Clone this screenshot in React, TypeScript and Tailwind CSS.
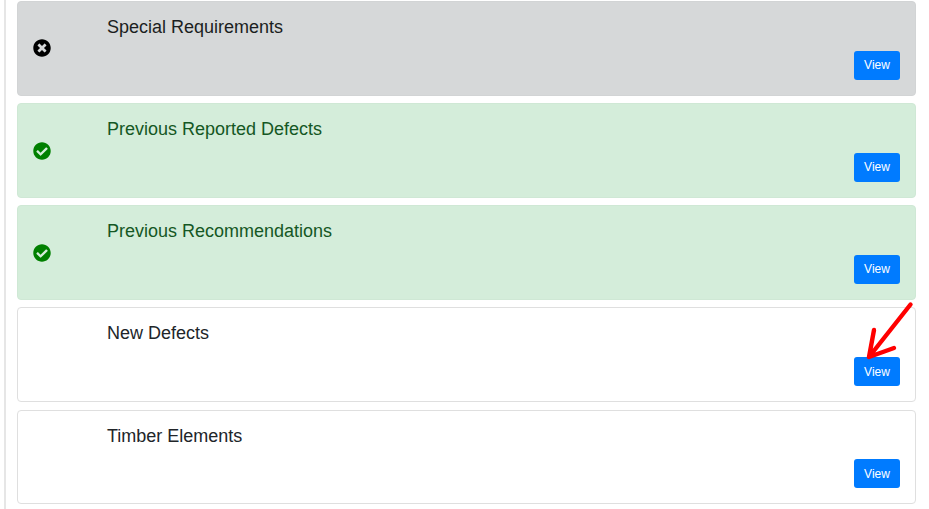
import { FaCheckCircle, FaTimesCircle } from "react-icons/fa";

type Item = { title: string; tone: "grey" | "green" | "white" };

const items: Item[] = [
  { title: "Special Requirements", tone: "grey" },
  { title: "Previous Reported Defects", tone: "green" },
  { title: "Previous Recommendations", tone: "green" },
  { title: "New Defects", tone: "white" },
  { title: "Timber Elements", tone: "white" },
];

const toneClass = {
  grey: "bg-[#d6d8d9] border-[#d2d4d5] text-[#1b1e21]",
  green: "bg-[#d4edda] border-[#cfe8d5] text-[#155724]",
  white: "bg-white border-[#dfdfdf] text-[#212529]",
};

function Card({ title, tone }: Item) {
  return (
    <div className={`flex h-[94.8px] items-stretch rounded-[4px] border ${toneClass[tone]}`}>
      <div className="flex w-[89px] shrink-0 items-center pl-[15px] pt-[0.3px]">
        {tone === "grey" && <FaTimesCircle className="text-[18px] text-black" />}
        {tone === "green" && <FaCheckCircle className="text-[18px] text-[#008000]" />}
      </div>
      <div className="flex flex-1 flex-col pr-[15px]">
        <div className="pt-[12px] text-[18px] leading-[27px]">{title}</div>
        <button className="mt-[9.8px] ml-auto h-[29px] w-[46px] rounded-[3px] bg-[#007bff] text-[12px] leading-[18px] text-white">
          View
        </button>
      </div>
    </div>
  );
}

export default function App() {
  return (
    <div className="relative h-[509px] w-[929px] overflow-hidden bg-white font-['Liberation_Sans',Arial,sans-serif]">
      <div className="ml-[4px] h-full w-[912px] border-l-2 border-[#e6e6e6] pl-[11px] pt-[0.8px]">
        <div className="flex flex-col gap-[7.4px]">
          {items.map((item) => (
            <Card key={item.title} {...item} />
          ))}
        </div>
      </div>
      <svg className="absolute left-[860px] top-[296px]" width="60" height="70" viewBox="0 0 60 70" fill="none">
        <path
          d="M50.5 8.5 L9 61 M14 34 L9 61 M34 52 L9 61"
          stroke="#ff0000"
          strokeWidth="4.4"
          strokeLinecap="round"
          strokeLinejoin="round"
        />
      </svg>
    </div>
  );
}
